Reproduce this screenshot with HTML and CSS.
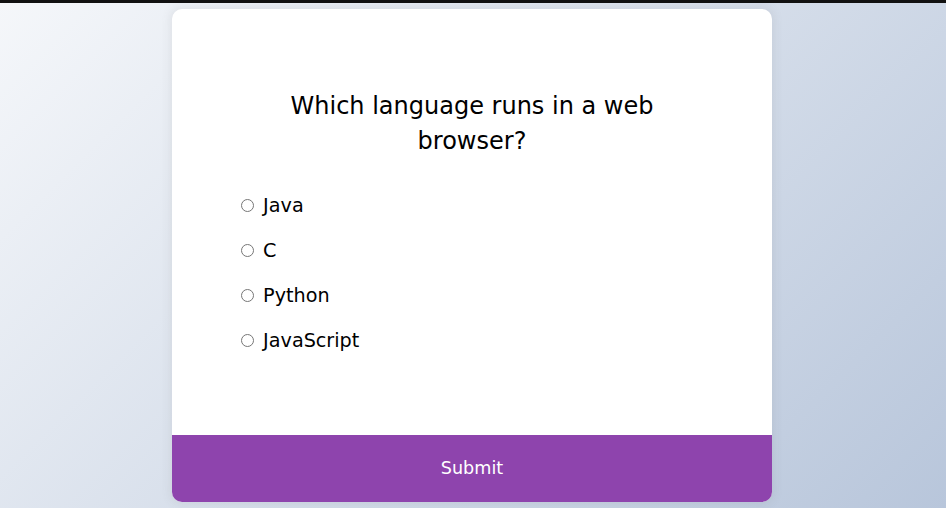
FILE: index.html
```html
<!DOCTYPE html>
<html lang="en">
<head>
  <meta charset="UTF-8" />
  <title>Quiz</title>
  <link rel="stylesheet" href="styles.css">
</head>
<body>

<div class="quiz-container" id="quiz">
  <div class="quiz-header">
    <h2 id="question">Which language runs in a web browser?</h2>
    <ul>
      <li>
        <input type="radio" name="answer" id="a" class="answer">
        <label for="a" id="a_text">Java</label>
      </li>
      <li>
        <input type="radio" name="answer" id="b" class="answer">
        <label for="b" id="b_text">C</label>
      </li>
      <li>
        <input type="radio" name="answer" id="c" class="answer">
        <label for="c" id="c_text">Python</label>
      </li>
      <li>
        <input type="radio" name="answer" id="d" class="answer">
        <label for="d" id="d_text">JavaScript</label>
      </li>
    </ul>
  </div>
  <button id="submit">Submit</button>
</div>

</body>
</html>
```

FILE: styles.css
```css
* {
  box-sizing: border-box;
}
body {
  background: #b8c6db;
  background-image: linear-gradient(315deg, #b8c6db 0%, #f5f7fa 100%);
  font-family: "DejaVu Sans", sans-serif;
  display: flex;
  align-items: center;
  justify-content: center;
  height: 100vh;
  overflow: hidden;
  margin: 0;
  border-top: 3px solid #111;
}
.quiz-container {
  background-color: #fff;
  border-radius: 10px;
  box-shadow: 0 0 10px 2px rgba(100, 100, 100, 0.1);
  width: 600px;
  margin-right: 2px;
  overflow: hidden;
}
.quiz-header {
  padding: 4rem;
}
h2 {
  padding: 1rem;
  text-align: center;
  margin: 0;
  font-size: 24px;
  font-weight: 500;
  line-height: 35px;
}
ul {
  list-style-type: none;
  padding: 0;
}
ul li {
  font-size: 1.2rem;
  line-height: 29px;
  margin: 1rem 0;
}
ul li label {
  cursor: pointer;
}
button {
  background-color: #8e44ad;
  color: #fff;
  border: none;
  display: block;
  width: 100%;
  cursor: pointer;
  font-size: 1.1rem;
  font-family: inherit;
  line-height: 1.5;
  padding: 1.3rem;
}
button:hover {
  background-color: #732d91;
}
```
